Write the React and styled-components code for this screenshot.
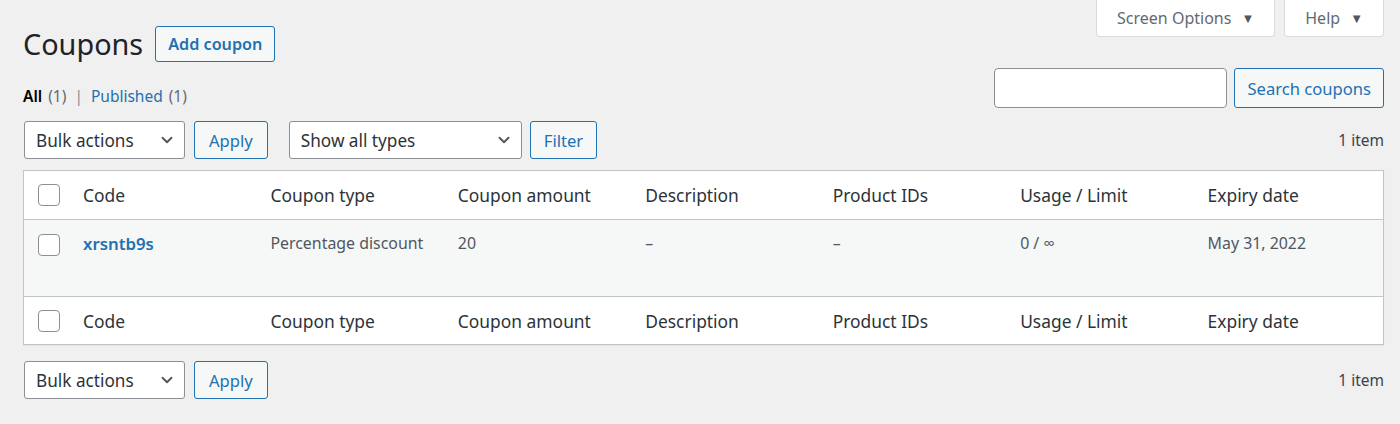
import React from "react";
import styled, { createGlobalStyle } from "styled-components";
import { ChevronDown } from "lucide-react";

const GlobalStyle = createGlobalStyle`
  html, body {
    margin: 0;
    padding: 0;
    background: #f0f0f1;
  }
  body {
    font-family: "Noto Sans", "Open Sans", sans-serif;
    color: #3c434a;
    font-size: 16px;
  }
`;

const Page = styled.div`
  padding: 0 16px 0 23px;
  height: 424px;
  box-sizing: border-box;
`;

const TopRow = styled.div`
  display: flex;
  justify-content: space-between;
  align-items: flex-start;
  height: 68px;
`;

const TitleGroup = styled.div`
  display: flex;
  align-items: center;
  gap: 12px;
  margin-top: 26px;
`;

const Title = styled.h1`
  margin: 0;
  font-size: 28.8px;
  font-weight: 400;
  color: #1d2327;
  line-height: 36px;
`;

const OutlineButton = styled.button`
  font-family: inherit;
  font-size: ${({ $size }) => $size || 16.6}px;
  font-weight: ${({ $bold }) => ($bold ? 600 : 400)};
  color: #2271b1;
  background: #f6f7f7;
  border: 1px solid #2271b1;
  border-radius: 3px;
  height: ${({ $h }) => $h || 38}px;
  padding: 0 ${({ $px }) => $px || 14}px;
  box-sizing: border-box;
  cursor: pointer;
  white-space: nowrap;
`;

const MetaLinks = styled.div`
  display: flex;
  gap: 9px;
`;

const MetaTab = styled.button`
  font-family: inherit;
  font-size: 16px;
  color: #646970;
  background: #fff;
  border: 1px solid #dcdcde;
  border-top: none;
  border-radius: 0 0 4px 4px;
  height: 37px;
  padding: 0 20px;
  display: flex;
  align-items: center;
  gap: 10px;
  box-sizing: border-box;
`;

const Caret = styled.span`
  font-size: 13px;
  color: #50575e;
`;

const SecondRow = styled.div`
  display: flex;
  justify-content: space-between;
  align-items: flex-end;
  height: 40px;
`;

const Views = styled.div`
  font-size: 15.5px;
  color: #646970;
  padding-bottom: 1px;
  display: flex;
  gap: 6px;
  align-items: center;
  line-height: 22px;
`;

const ViewLink = styled.span`
  color: ${({ $current }) => ($current ? "#000" : "#2271b1")};
  font-weight: ${({ $current }) => ($current ? 600 : 400)};
`;

const Sep = styled.span`
  color: #8c8f94;
  margin: 0 2px;
`;

const SearchBox = styled.div`
  display: flex;
  gap: 7px;
`;

const SearchInput = styled.input`
  width: 233px;
  height: 40px;
  box-sizing: border-box;
  border: 1px solid #8c8f94;
  border-radius: 4px;
  background: #fff;
`;

const TableNav = styled.div`
  display: flex;
  align-items: center;
  justify-content: space-between;
  margin-top: ${({ $top }) => $top}px;
  height: 38px;
  padding-left: 1px;
`;

const Actions = styled.div`
  display: flex;
  align-items: center;
  gap: 9px;
`;

const FilterGroup = styled(Actions)`
  margin-left: 12px;
  gap: 8px;
`;

const Select = styled.div`
  width: ${({ $w }) => $w}px;
  height: 38px;
  box-sizing: border-box;
  border: 1px solid #8c8f94;
  border-radius: 3px;
  background: #fff;
  display: flex;
  align-items: center;
  justify-content: space-between;
  padding: 0 8px 0 11px;
  color: #2c3338;
  font-size: 17.2px;
`;

const ItemCount = styled.div`
  font-size: 15.5px;
  color: #3c434a;
`;

const Table = styled.div`
  margin-top: 11px;
  background: #fff;
  border: 1px solid #c3c4c7;
  box-shadow: 0 1px 1px rgba(0, 0, 0, 0.04);
`;

const Row = styled.div`
  display: grid;
  grid-template-columns: 47px repeat(7, 1fr);
  height: ${({ $h }) => $h}px;
  align-items: ${({ $top }) => ($top ? "start" : "center")};
  background: ${({ $alt }) => ($alt ? "#f6f7f7" : "#fff")};
  border-top: ${({ $line }) => ($line ? "1px solid #c3c4c7" : "none")};
  box-sizing: border-box;
`;

const CheckCell = styled.div`
  display: flex;
  justify-content: flex-start;
  padding-left: 14px;
  padding-top: ${({ $pt }) => $pt || 0}px;
`;

const Checkbox = styled.span`
  width: 22px;
  height: 22px;
  box-sizing: border-box;
  border: 1px solid #8c8f94;
  border-radius: 4px;
  background: #fff;
  display: block;
`;

const HeadCell = styled.div`
  padding-left: 12px;
  font-size: 17.4px;
  color: #2c3338;
`;

const Cell = styled.div`
  padding: 12px 0 0 12px;
  font-size: 15.9px;
  color: #50575e;
`;

const CodeLink = styled.a`
  color: #2271b1;
  font-weight: 600;
  font-size: 16.8px;
  text-decoration: none;
`;

const columns = [
  "Code",
  "Coupon type",
  "Coupon amount",
  "Description",
  "Product IDs",
  "Usage / Limit",
  "Expiry date",
];

const HeaderRow = ({ line }) => (
  <Row $h={48} $line={line}>
    <CheckCell>
      <Checkbox />
    </CheckCell>
    {columns.map((c) => (
      <HeadCell key={c}>{c}</HeadCell>
    ))}
  </Row>
);

const BulkNav = ({ top, children }) => (
  <TableNav $top={top}>
    <Actions>
      <Select $w={161}>
        Bulk actions <ChevronDown size={18} strokeWidth={2.5} color="#50575e" />
      </Select>
      <OutlineButton $px={14}>Apply</OutlineButton>
      {children}
    </Actions>
    <ItemCount>1 item</ItemCount>
  </TableNav>
);

export default function App() {
  return (
    <>
      <GlobalStyle />
      <Page>
        <TopRow>
          <TitleGroup>
            <Title>Coupons</Title>
            <OutlineButton $bold $h={36} $px={12} $size={16.2}>
              Add coupon
            </OutlineButton>
          </TitleGroup>
          <MetaLinks>
            <MetaTab>
              Screen Options <Caret>▼</Caret>
            </MetaTab>
            <MetaTab>
              Help <Caret>▼</Caret>
            </MetaTab>
          </MetaLinks>
        </TopRow>
        <SecondRow>
          <Views>
            <ViewLink $current>All</ViewLink> (1)
            <Sep>|</Sep>
            <ViewLink>Published</ViewLink> (1)
          </Views>
          <SearchBox>
            <SearchInput />
            <OutlineButton $h={40} $px={12}>
              Search coupons
            </OutlineButton>
          </SearchBox>
        </SecondRow>
        <BulkNav top={13}>
          <FilterGroup>
            <Select $w={233}>
              Show all types{" "}
              <ChevronDown size={18} strokeWidth={2.5} color="#50575e" />
            </Select>
            <OutlineButton $px={13}>Filter</OutlineButton>
          </FilterGroup>
        </BulkNav>
        <Table>
          <HeaderRow />
          <Row $h={77} $alt $line $top>
            <CheckCell $pt={14}>
              <Checkbox />
            </CheckCell>
            <Cell>
              <CodeLink href="#">xrsntb9s</CodeLink>
            </Cell>
            <Cell>Percentage discount</Cell>
            <Cell>20</Cell>
            <Cell>–</Cell>
            <Cell>–</Cell>
            <Cell>0 / ∞</Cell>
            <Cell>May 31, 2022</Cell>
          </Row>
          <HeaderRow line />
        </Table>
        <BulkNav top={16} />
      </Page>
    </>
  );
}
